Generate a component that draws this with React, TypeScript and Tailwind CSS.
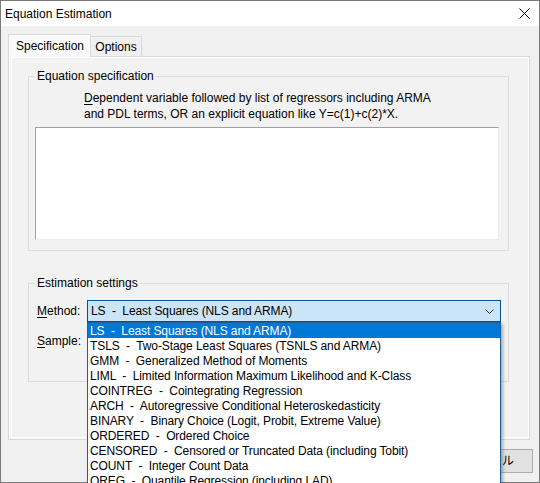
import type { ReactNode } from 'react'

const methods = [
  'LS  -  Least Squares (NLS and ARMA)',
  'TSLS  -  Two-Stage Least Squares (TSNLS and ARMA)',
  'GMM  -  Generalized Method of Moments',
  'LIML  -  Limited Information Maximum Likelihood and K-Class',
  'COINTREG  -  Cointegrating Regression',
  'ARCH  -  Autoregressive Conditional Heteroskedasticity',
  'BINARY  -  Binary Choice (Logit, Probit, Extreme Value)',
  'ORDERED  -  Ordered Choice',
  'CENSORED  -  Censored or Truncated Data (including Tobit)',
  'COUNT  -  Integer Count Data',
  'QREG  -  Quantile Regression (including LAD)',
]

function GroupBox({ title, className, children }: { title: string; className: string; children: ReactNode }) {
  return (
    <div className={`relative w-[481px] border border-[#dcdcdc] ${className}`}>
      <span className="absolute left-[6px] top-[-8px] bg-[#f2f2f2] px-[2px] leading-[14px]">{title}</span>
      {children}
    </div>
  )
}

export default function App() {
  const selected = 0

  return (
    <div className="h-[483px] w-[540px] overflow-hidden">
      <div className="relative h-[483px] w-[540px] border border-[#7a7a7a] bg-[#f0f0f0] font-['Liberation_Sans','Noto_Sans_CJK_JP',sans-serif] text-[12px] text-black">
        {/* Title bar */}
        <div className="flex h-[25px] items-center justify-between bg-white pl-[4px]">
          <span>Equation Estimation</span>
          <svg width="11" height="11" viewBox="0 0 11 11" className="mr-[9px]">
            <path d="M0.5 0.5 L10.5 10.5 M10.5 0.5 L0.5 10.5" stroke="#000" strokeWidth="1" fill="none" />
          </svg>
        </div>

        <div className="pl-[7px] pr-[6px] pt-[8px]">
          {/* Tabs */}
          <div className="flex h-[22px] items-end">
            <div className="relative z-10 -mb-px flex h-[23px] w-[83px] items-center border-l border-r border-t border-[#d9d9d9] bg-[#f9f9f9] pl-[7px]">
              Specification
            </div>
            <div className="flex h-[20px] w-[51px] items-center justify-center border-r border-t border-[#d9d9d9]">
              Options
            </div>
          </div>

          {/* Tab page */}
          <div className="h-[384px] w-[522px] border border-[#d9d9d9] bg-[#f9f9f9]">
            <div className="ml-[2px] h-[381px] w-[518px] border border-white bg-[#f2f2f2] pl-[16px] pt-[18px]">
              <GroupBox title="Equation specification" className="h-[175px]">
                <p className="ml-[55px] mt-[13px] leading-[16px]">
                  <span className="underline underline-offset-[2px]">D</span>ependent variable followed by list of regressors including ARMA
                  <br />
                  and PDL terms, OR an explicit equation like Y=c(1)+c(2)*X.
                </p>
                <div className="ml-[6px] mt-[5px] h-[113px] w-[464px] border-b border-l border-r border-t border-b-[#ececec] border-l-[#a0a0a0] border-r-[#ececec] border-t-[#a0a0a0] bg-white" />
              </GroupBox>

              <GroupBox title="Estimation settings" className="mt-[32px] h-[99px]">
                <div className="ml-[8px] mt-[16px] flex items-center">
                  <span className="w-[50px]">
                    <span className="underline underline-offset-[2px]">M</span>ethod:
                  </span>
                  <div className="relative flex h-[22px] w-[414px] items-center justify-between border border-[#005499] bg-[#cce4f7] pl-[3px] pr-[6px]">
                    <span className="whitespace-pre tracking-[-0.1px]">{methods[selected]}</span>
                    <svg width="9" height="5" viewBox="0 0 9 5">
                      <path d="M0.5 0.5 L4.5 4.5 L8.5 0.5" stroke="#404040" strokeWidth="1" fill="none" />
                    </svg>

                    {/* Open dropdown list */}
                    <ul className="absolute left-[-1px] top-[21px] z-20 w-[414px] border border-[#1b5f9e] bg-white shadow-[2px_2px_3px_rgba(0,0,0,0.3)]">
                      {methods.map((m, i) => (
                        <li
                          key={m}
                          className={`h-[15px] whitespace-pre pl-[2px] pt-[2px] leading-[13px] tracking-[-0.1px] ${i === selected ? 'bg-[#0078d7] text-white' : ''}`}
                        >
                          {m}
                        </li>
                      ))}
                    </ul>
                  </div>
                </div>
                <div className="ml-[8px] mt-[8px] flex h-[22px] items-center">
                  <span className="w-[50px]">
                    <span className="underline underline-offset-[2px]">S</span>ample:
                  </span>
                  <div className="h-[22px] w-[200px] border border-[#7a7a7a] bg-white" />
                </div>
              </GroupBox>
            </div>
          </div>

          {/* Buttons */}
          <div className="mt-[9px] flex justify-end">
            <button type="button" className="flex h-[24px] w-[98px] items-center justify-center border border-[#adadad] bg-[#e1e1e1]">
              キャンセル
            </button>
          </div>
        </div>
      </div>
    </div>
  )
}
